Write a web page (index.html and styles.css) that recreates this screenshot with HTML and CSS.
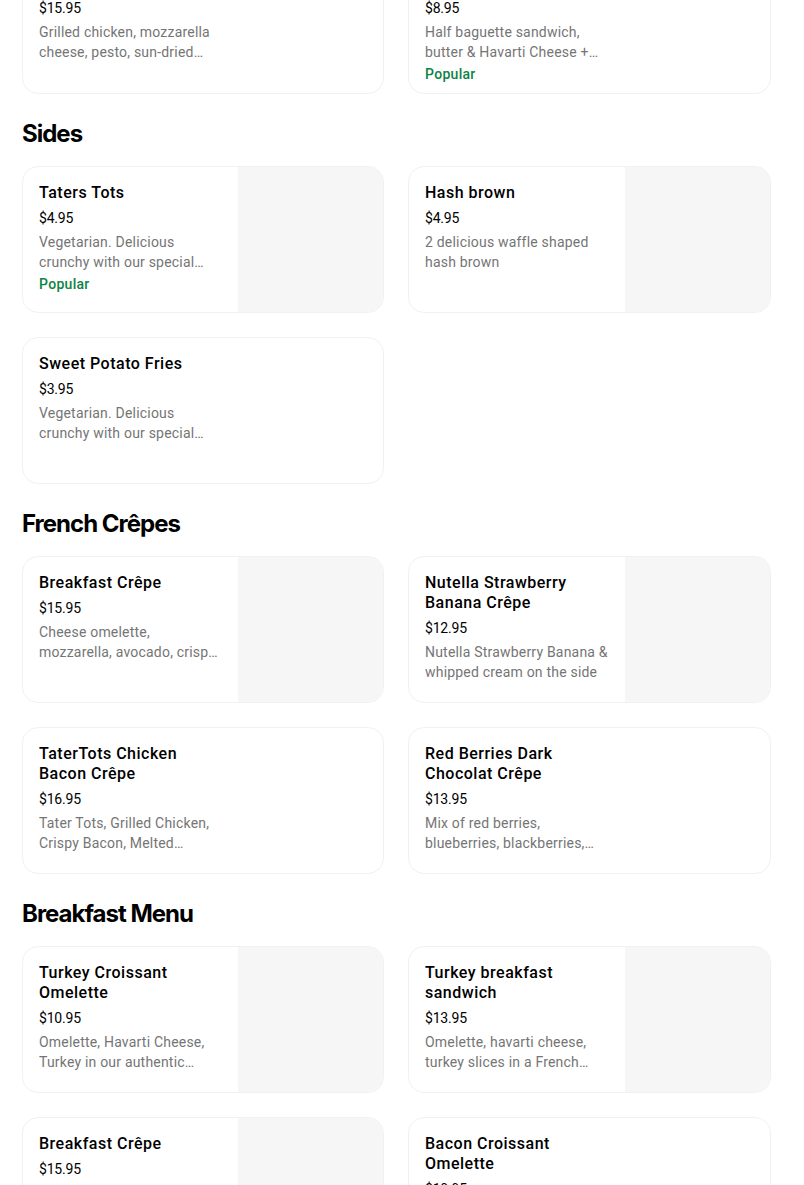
FILE: index.html
```html
<!DOCTYPE html>
<html lang="en">
<head>
<meta charset="utf-8">
<title>Menu</title>
<link rel="stylesheet" href="styles.css">
</head>
<body>
<main class="menu">
  <section class="section section-first">
    <div class="grid">
      <div class="card card-short">
        <div class="info">
          <div class="title">Chicken Pesto Panini</div>
          <div class="price">$15.95</div>
          <div class="desc">Grilled chicken, mozzarella cheese, pesto, sun-dried tomatoes on a pressed panini bread</div>
        </div>
        <div class="thumb thumb-none"></div>
      </div>
      <div class="card card-short">
        <div class="info">
          <div class="title">Jambon Beurre</div>
          <div class="price">$8.95</div>
          <div class="desc">Half baguette sandwich, butter &amp; Havarti Cheese + ham slices</div>
          <div class="tag">Popular</div>
        </div>
        <div class="thumb thumb-none"></div>
      </div>
    </div>
  </section>

  <section class="section">
    <h2 class="heading">Sides</h2>
    <div class="grid">
      <div class="card">
        <div class="info">
          <div class="title">Taters Tots</div>
          <div class="price">$4.95</div>
          <div class="desc">Vegetarian. Delicious crunchy with our special seasoning and sauce</div>
          <div class="tag">Popular</div>
        </div>
        <div class="thumb"></div>
      </div>
      <div class="card">
        <div class="info">
          <div class="title">Hash brown</div>
          <div class="price">$4.95</div>
          <div class="desc">2 delicious waffle shaped hash brown</div>
        </div>
        <div class="thumb"></div>
      </div>
      <div class="card">
        <div class="info">
          <div class="title">Sweet Potato Fries</div>
          <div class="price">$3.95</div>
          <div class="desc">Vegetarian. Delicious crunchy with our special seasoning and sauce</div>
        </div>
        <div class="thumb thumb-none"></div>
      </div>
    </div>
  </section>

  <section class="section">
    <h2 class="heading">French Crêpes</h2>
    <div class="grid">
      <div class="card">
        <div class="info">
          <div class="title">Breakfast Crêpe</div>
          <div class="price">$15.95</div>
          <div class="desc">Cheese omelette, mozzarella, avocado, crispy bacon and turkey slices</div>
        </div>
        <div class="thumb"></div>
      </div>
      <div class="card">
        <div class="info">
          <div class="title">Nutella Strawberry Banana Crêpe</div>
          <div class="price">$12.95</div>
          <div class="desc">Nutella Strawberry Banana &amp; whipped cream on the side</div>
        </div>
        <div class="thumb"></div>
      </div>
      <div class="card">
        <div class="info">
          <div class="title">TaterTots Chicken Bacon Crêpe</div>
          <div class="price">$16.95</div>
          <div class="desc">Tater Tots, Grilled Chicken, Crispy Bacon, Melted Mozzarella and our special sauce</div>
        </div>
        <div class="thumb thumb-none"></div>
      </div>
      <div class="card">
        <div class="info">
          <div class="title">Red Berries Dark Chocolat Crêpe</div>
          <div class="price">$13.95</div>
          <div class="desc">Mix of red berries, blueberries, blackberries, strawberries and dark chocolate</div>
        </div>
        <div class="thumb thumb-none"></div>
      </div>
    </div>
  </section>

  <section class="section">
    <h2 class="heading">Breakfast Menu</h2>
    <div class="grid">
      <div class="card">
        <div class="info">
          <div class="title">Turkey Croissant Omelette</div>
          <div class="price">$10.95</div>
          <div class="desc">Omelette, Havarti Cheese, Turkey in our authentic French butter croissant</div>
        </div>
        <div class="thumb"></div>
      </div>
      <div class="card">
        <div class="info">
          <div class="title">Turkey breakfast sandwich</div>
          <div class="price">$13.95</div>
          <div class="desc">Omelette, havarti cheese, turkey slices in a French baguette</div>
        </div>
        <div class="thumb"></div>
      </div>
      <div class="card">
        <div class="info">
          <div class="title">Breakfast Crêpe</div>
          <div class="price">$15.95</div>
          <div class="desc">Cheese omelette, mozzarella, avocado, crispy bacon and turkey slices</div>
        </div>
        <div class="thumb"></div>
      </div>
      <div class="card">
        <div class="info">
          <div class="title">Bacon Croissant Omelette</div>
          <div class="price">$10.95</div>
          <div class="desc">Omelette, Havarti Cheese, Bacon in our authentic French butter croissant</div>
        </div>
        <div class="thumb thumb-none"></div>
      </div>
    </div>
  </section>
</main>
</body>
</html>
```

FILE: styles.css
```css
html, body {
  margin: 0;
  padding: 0;
  background: #ffffff;
}

body {
  font-family: Roboto, "Liberation Sans", Arial, sans-serif;
  color: #000000;
  overflow: hidden;
}

.menu {
  width: 749px;
  padding-left: 22px;
}

.section-first {
  margin-top: -44px;
}

.heading {
  margin: 0;
  padding-top: 24px;
  margin-bottom: 16px;
  font-family: Inter, "Liberation Sans", sans-serif;
  font-size: 24px;
  line-height: 32px;
  font-weight: 700;
  letter-spacing: -1px;
}

.grid {
  display: grid;
  grid-template-columns: 362px 363px;
  column-gap: 24px;
  row-gap: 24px;
}

.card {
  display: flex;
  height: 147px;
  box-sizing: border-box;
  border: 1px solid #f1f1f1;
  border-radius: 16px;
  overflow: hidden;
  background: #ffffff;
}

.card-short {
  height: 138px;
}

.info {
  flex: 1;
  min-width: 0;
  padding: 16px 16px 0 16px;
}

.thumb {
  flex: 0 0 145px;
  background: #f6f6f6;
}

.thumb-none {
  background: transparent;
}

.title {
  font-size: 16px;
  line-height: 20px;
  font-weight: 500;
  letter-spacing: 0.5px;
  color: #000000;
  margin-bottom: 5px;
}

.price {
  font-size: 14px;
  line-height: 20px;
  color: #000000;
  margin-bottom: 4px;
  letter-spacing: -0.2px;
}

.desc {
  font-size: 14px;
  line-height: 20px;
  letter-spacing: 0.2px;
  color: #757575;
  display: -webkit-box;
  -webkit-line-clamp: 2;
  -webkit-box-orient: vertical;
  overflow: hidden;
}

.tag {
  margin-top: 2px;
  font-size: 14px;
  line-height: 20px;
  font-weight: 500;
  letter-spacing: 0.3px;
  color: #0e8345;
}
```
